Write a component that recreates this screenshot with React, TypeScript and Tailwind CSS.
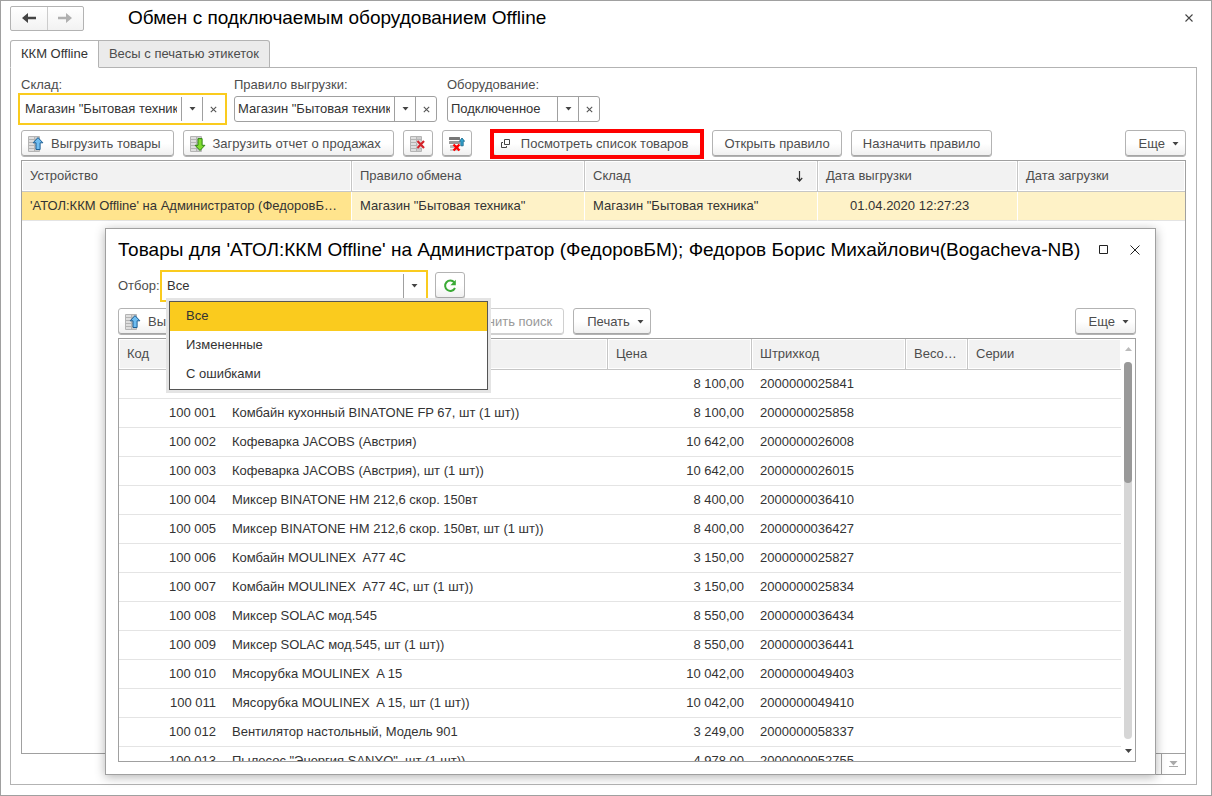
import { useState } from 'react';
import type { ReactNode } from 'react';

const devices = [
  {
    name: "'АТОЛ:ККМ Offline' на Администратор (ФедоровБМ); Федоров Борис Михайлович",
    rule: 'Магазин "Бытовая техника"',
    store: 'Магазин "Бытовая техника"',
    uploaded: '01.04.2020 12:27:23',
    downloaded: '',
  },
];

const goods = [
  ['', '', '8 100,00', '2000000025841'],
  ['100 001', 'Комбайн кухонный BINATONE FP 67, шт (1 шт))', '8 100,00', '2000000025858'],
  ['100 002', 'Кофеварка JACOBS (Австрия)', '10 642,00', '2000000026008'],
  ['100 003', 'Кофеварка JACOBS (Австрия), шт (1 шт))', '10 642,00', '2000000026015'],
  ['100 004', 'Миксер BINATONE HM 212,6 скор. 150вт', '8 400,00', '2000000036410'],
  ['100 005', 'Миксер BINATONE HM 212,6 скор. 150вт, шт (1 шт))', '8 400,00', '2000000036427'],
  ['100 006', 'Комбайн MOULINEX  A77 4C', '3 150,00', '2000000025827'],
  ['100 007', 'Комбайн MOULINEX  A77 4C, шт (1 шт))', '3 150,00', '2000000025834'],
  ['100 008', 'Миксер SOLAC мод.545', '8 550,00', '2000000036434'],
  ['100 009', 'Миксер SOLAC мод.545, шт (1 шт))', '8 550,00', '2000000036441'],
  ['100 010', 'Мясорубка MOULINEX  A 15', '10 042,00', '2000000049403'],
  ['100 011', 'Мясорубка MOULINEX  A 15, шт (1 шт))', '10 042,00', '2000000049410'],
  ['100 012', 'Вентилятор настольный, Модель 901', '3 249,00', '2000000058337'],
  ['100 013', 'Пылесос "Энергия SANYO", шт (1 шт))', '4 978,00', '2000000052755'],
];

const filters = ['Все', 'Измененные', 'С ошибками'];

function Caret() {
  return (
    <svg width="7" height="4" viewBox="0 0 7 4" className="shrink-0" aria-hidden="true">
      <path d="M0.5 0h6L3.5 3.6z" fill="#444" />
    </svg>
  );
}

function SmallCross() {
  return (
    <svg width="7" height="7" viewBox="0 0 7 7" aria-hidden="true">
      <path d="M0.8 0.8l5.4 5.4M6.2 0.8L0.8 6.2" stroke="#555" strokeWidth="1.1" />
    </svg>
  );
}

function Rack() {
  return (
    <g>
      <rect x="0" y="0" width="12" height="16" rx="1" fill="#b4b4b4" />
      {[1, 4, 7, 10, 13].map((y) => (
        <g key={y}>
          <rect x="1" y={y} width="5" height="2" fill="#dedede" />
          <rect x="7" y={y} width="4" height="2" fill="#cccccc" />
        </g>
      ))}
    </g>
  );
}

function UploadIcon() {
  return (
    <svg width="16" height="16" viewBox="0 0 16 16" className="shrink-0" aria-hidden="true">
      <Rack />
      <path d="M10 1.6l4.9 5.2h-2.8v6.7H8V6.8H5.100z" fill="#6fbdf0" stroke="#1d5f95" />
    </svg>
  );
}

function DownloadIcon() {
  return (
    <svg width="16" height="16" viewBox="0 0 16 16" className="shrink-0" aria-hidden="true">
      <Rack />
      <path d="M10 14.500L5.100 9.300H8V2.600h4.100v6.700h2.800z" fill="#7fdb2e" stroke="#2f8413" />
    </svg>
  );
}

function ClearIcon() {
  return (
    <svg width="16" height="16" viewBox="0 0 16 16" className="shrink-0" aria-hidden="true">
      <Rack />
      <path d="M7.500 5l6.500 7M14 5l-6.500 7" stroke="#fff" strokeWidth="3.600" opacity="0.6" />
      <path d="M7.500 5l6.500 7M14 5l-6.500 7" stroke="#d2232a" strokeWidth="2.200" />
    </svg>
  );
}

function ClearUploadIcon() {
  return (
    <svg width="16" height="16" viewBox="0 0 16 16" className="shrink-0" aria-hidden="true">
      <rect x="0" y="1" width="11" height="3" rx="0.5" fill="#777" />
      <rect x="0" y="5" width="11" height="3" rx="0.5" fill="#999" />
      <rect x="1" y="9" width="9" height="3" rx="0.5" fill="#bbb" />
      <rect x="1" y="13" width="9" height="2" rx="0.5" fill="#ccc" />
      <path d="M13 2l2.600 3.300h-1.400v4.500h-2.400v-4.500h-1.400z" fill="#35a4cf" stroke="#0f6288" strokeWidth="0.800" />
      <path d="M4.500 8.500l6 6M10.500 8.500l-6 6" stroke="#f00" strokeWidth="2.400" />
    </svg>
  );
}

function WindowsIcon() {
  return (
    <svg width="14" height="10" viewBox="0 0 14 10" className="shrink-0" aria-hidden="true">
      <path d="M4.500 0.500h5v5h-5zM3 3.500H1.500v5h5V7" fill="none" stroke="#444" />
    </svg>
  );
}

function RefreshIcon() {
  return (
    <svg width="14" height="14" viewBox="0 0 14 14" aria-hidden="true">
      <path d="M11.300 3.300A5.200 5.200 0 1 0 12 9" fill="none" stroke="#3aaa35" strokeWidth="2" />
      <path d="M12.800 0.800v5.400H7.400z" fill="#3aaa35" />
    </svg>
  );
}

function Arrow({ back, color }: { back?: boolean; color: string }) {
  return (
    <svg width="14" height="12" viewBox="0 0 14 12" aria-hidden="true">
      {back ? (
        <path d="M0 6l6-5v3.800h8v2.400H6V11z" fill={color} />
      ) : (
        <path d="M14 6L8 1v3.800H0v2.400h8V11z" fill={color} />
      )}
    </svg>
  );
}

const buttonBase =
  'flex h-[27px] shrink-0 items-center justify-center rounded-[3px] border border-[#b3b3b3] bg-linear-to-b from-white from-50% to-[#efefef] inset-shadow-[0_-1px_0_#a6a6a6] whitespace-nowrap text-[#4d4d4d]';

function Button({ icon, menu, children }: { icon?: ReactNode; menu?: boolean; children: ReactNode }) {
  const padding = icon ? 'pl-1.5 pr-3' : menu ? 'pl-[13px] pr-1.5' : 'px-[11px]';
  return (
    <button type="button" className={`${buttonBase} gap-[7px] ${padding}`}>
      {icon}
      {children}
      {menu && <Caret />}
    </button>
  );
}

function IconButton({ label, children }: { label: string; children: ReactNode }) {
  return (
    <button type="button" aria-label={label} className={`${buttonBase} w-[30px]`}>
      {children}
    </button>
  );
}

function Field({ id, label, value, width, active }: { id: string; label: string; value: string; width: string; active?: boolean }) {
  const frame = active
    ? 'border-transparent outline-2 outline-offset-1 outline-[#facb1e]'
    : 'rounded-[3px] border-[#a0a0a0]';
  return (
    <div className={width}>
      <label htmlFor={id} className="mb-0.5 block leading-[18px] text-[#4d4d4d]">
        {label}
      </label>
      <div className={`flex h-[26px] border bg-white ${frame}`}>
        <input id={id} defaultValue={value} className="mr-1 ml-[3px] min-w-0 flex-1 text-[#333] outline-none" />
        <button type="button" aria-label="Выбрать" className="flex w-[21px] items-center justify-center border-l border-[#a0a0a0]">
          <Caret />
        </button>
        <button type="button" aria-label="Очистить" className="flex w-[21px] items-center justify-center border-l border-[#a0a0a0]">
          <SmallCross />
        </button>
      </div>
    </div>
  );
}

function HeadCell({ children, last }: { children?: ReactNode; last?: boolean }) {
  return (
    <th
      className={`h-[31px] truncate border-b border-[#c6c6c6] bg-[#f2f2f2] px-2 text-left font-normal text-[#4d4d4d] inset-shadow-[0_0_0_1px_#fff] ${last ? '' : 'border-r'}`}
    >
      {children}
    </th>
  );
}

function GoodsWindow() {
  const [filter, setFilter] = useState('Все');
  const [open, setOpen] = useState(true);
  return (
    <section
      role="dialog"
      aria-labelledby="goods-title"
      className="absolute top-[227px] right-[55px] bottom-5 left-[104px] flex flex-col border border-[#a0a0a0] bg-white pr-[19px] pb-3 pl-3 shadow-[0_2px_10px_rgba(0,0,0,0.3)]"
    >
      <header className="flex h-[42px] shrink-0 items-center justify-between">
        <h2 id="goods-title" className="truncate text-[19px] leading-6 text-black">
          Товары для 'АТОЛ:ККМ Offline' на Администратор (ФедоровБМ); Федоров Борис Михайлович(Bogacheva-NB)
        </h2>
        <div className="-mr-3 flex shrink-0 items-center">
          <button type="button" aria-label="Развернуть" className="flex h-6 w-9 items-center justify-center">
            <svg width="10" height="10" viewBox="0 0 10 10" aria-hidden="true">
              <path d="M0.500 0.500h8v8h-8z" fill="none" stroke="#222" />
            </svg>
          </button>
          <button type="button" aria-label="Закрыть окно" className="flex h-6 w-[26px] items-center justify-center">
            <svg width="10" height="10" viewBox="0 0 10 10" aria-hidden="true">
              <path d="M0.500 0.500l9 9M9.500 0.500l-9 9" stroke="#222" />
            </svg>
          </button>
        </div>
      </header>

      <div className="mt-px flex items-center">
        <label htmlFor="goods-filter" className="w-[45px] shrink-0 text-[#4d4d4d]">
          Отбор:
        </label>
        <div className="relative w-[262px]">
          <div className="relative flex h-[26px] items-center outline-2 outline-offset-1 outline-[#facb1e]">
            <select
              id="goods-filter"
              value={filter}
              onChange={(event) => setFilter(event.target.value)}
              onMouseDown={(event) => {
                event.preventDefault();
                setOpen(!open);
              }}
              className="h-full w-full appearance-none pl-1 text-[#333] outline-none"
            >
              {filters.map((name) => (
                <option key={name}>{name}</option>
              ))}
            </select>
            <span className="pointer-events-none absolute inset-y-px right-0 flex w-[22px] items-center justify-center border-l border-[#a0a0a0]">
              <Caret />
            </span>
          </div>
          {open && (
            <ul className="absolute top-7 left-1.5 z-10 w-[319px] border border-[#555] bg-white ring-3 ring-[#e4e4e4]">
              {filters.map((name) => (
                <li key={name}>
                  <button
                    type="button"
                    onClick={() => {
                      setFilter(name);
                      setOpen(false);
                    }}
                    className={`block h-[29px] w-full px-4 text-left text-[#333] ${name === filter ? 'bg-[#facb1e]' : 'bg-white'}`}
                  >
                    {name}
                  </button>
                </li>
              ))}
            </ul>
          )}
        </div>
        <div className="ml-2.5">
          <IconButton label="Обновить">
            <RefreshIcon />
          </IconButton>
        </div>
      </div>

      <div className="mt-[9px] mb-[3px] flex gap-[9px]">
        <Button icon={<UploadIcon />}>Выгрузить товары</Button>
        <button type="button" className={`${buttonBase} w-[155px]`}>
          Найти...
        </button>
        <button
          type="button"
          disabled
          className="h-[27px] shrink-0 rounded-[3px] border border-[#d0d0d0] bg-white px-[11px] text-[#999] inset-shadow-[0_-1px_0_#d0d0d0]"
        >
          Отменить поиск
        </button>
        <Button menu>Печать</Button>
        <div className="ml-auto">
          <Button menu>Еще</Button>
        </div>
      </div>

      <div className="flex min-h-0 flex-1 border border-[#a0a0a0]">
        <div className="min-w-0 flex-1 overflow-hidden">
          <table className="w-full table-fixed border-separate border-spacing-0 text-[#333]">
            <colgroup>
              <col className="w-[105px]" />
              <col />
              <col className="w-36" />
              <col className="w-[154px]" />
              <col className="w-[62px]" />
              <col className="w-[153px]" />
            </colgroup>
            <thead>
              <tr>
                <HeadCell>Код</HeadCell>
                <HeadCell>Номенклатура</HeadCell>
                <HeadCell>Цена</HeadCell>
                <HeadCell>Штрихкод</HeadCell>
                <HeadCell>Весовой</HeadCell>
                <HeadCell last>Серии</HeadCell>
              </tr>
            </thead>
            <tbody>
              {goods.map(([code, name, price, barcode]) => (
                <tr key={barcode} className="h-[29px] *:border-b *:border-[#e4e4e4] *:px-2">
                  <td className="text-right">{code}</td>
                  <td className="truncate whitespace-pre">{name}</td>
                  <td className="text-right">{price}</td>
                  <td>{barcode}</td>
                  <td />
                  <td />
                </tr>
              ))}
            </tbody>
          </table>
        </div>
        <div className="flex w-3.5 shrink-0 flex-col items-center pt-2 pb-2" aria-hidden="true">
          <svg width="7" height="4" viewBox="0 0 7 4" className="mb-[11px]">
            <path d="M3.500 0L7 4H0z" fill="#bbb" />
          </svg>
          <div className="min-h-0 w-2 flex-1 rounded-full bg-[#d6d6d6]">
            <div className="h-[32%] rounded-full bg-[#999]" />
          </div>
          <svg width="7" height="4" viewBox="0 0 7 4" className="mt-2.5">
            <path d="M0 0h7L3.500 4z" fill="#444" />
          </svg>
        </div>
      </div>
    </section>
  );
}

export default function App() {
  return (
    <main className="relative flex h-screen flex-col border border-[#a0a0a0] bg-white pr-3.5 pb-2.5 pl-[9px] font-['Liberation_Sans',Arial,sans-serif] text-[13px] leading-[18px]">
      <header className="flex h-[34px] shrink-0 items-center">
        <div className="mr-11 flex h-[25px] w-[74px] rounded-[2px] border border-[#b3b3b3] bg-linear-to-b from-white to-[#f2f2f2]">
          <button type="button" aria-label="Назад" className="flex flex-1 items-center justify-center border-r border-[#ccc]">
            <Arrow back color="#444" />
          </button>
          <button type="button" aria-label="Вперед" className="flex flex-1 items-center justify-center">
            <Arrow color="#b0b0b0" />
          </button>
        </div>
        <h1 className="text-[19px] leading-6 text-black">Обмен с подключаемым оборудованием Offline</h1>
        <button type="button" aria-label="Закрыть" className="ml-auto flex size-4 items-center justify-center">
          <svg width="8" height="8" viewBox="0 0 8 8" aria-hidden="true">
            <path d="M0.500 0.500l7 7M7.500 0.500l-7 7" stroke="#444" strokeWidth="1.100" />
          </svg>
        </button>
      </header>

      <div role="tablist" className="relative mt-[5px] -mb-px flex h-7 shrink-0">
        <button
          type="button"
          role="tab"
          aria-selected="true"
          className="rounded-tl-[3px] border border-[#b3b3b3] border-b-white bg-white px-2.5 text-[#333]"
        >
          ККМ Offline
        </button>
        <button
          type="button"
          role="tab"
          aria-selected="false"
          className="rounded-tr-[3px] border border-l-0 border-[#b3b3b3] bg-[#ebebeb] px-2.5 text-[#4d4d4d]"
        >
          Весы с печатью этикеток
        </button>
      </div>

      <div role="tabpanel" className="flex min-h-0 flex-1 flex-col border border-[#b3b3b3] px-2.5 pt-2 pb-[9px]">
        <div className="flex gap-2.5">
          <Field id="store" label="Склад:" value={'Магазин "Бытовая техника"'} width="w-[203px]" active />
          <Field id="rule" label="Правило выгрузки:" value={'Магазин "Бытовая техника"'} width="w-[203px]" />
          <Field id="equipment" label="Оборудование:" value="Подключенное" width="w-[153px]" />
        </div>

        <div className="mt-2 mb-[3px] flex gap-[9px]">
          <Button icon={<UploadIcon />}>Выгрузить товары</Button>
          <Button icon={<DownloadIcon />}>Загрузить отчет о продажах</Button>
          <IconButton label="Очистить товары">
            <ClearIcon />
          </IconButton>
          <IconButton label="Очистить и выгрузить">
            <ClearUploadIcon />
          </IconButton>
          <div className="relative mr-0.5 ml-3">
            <Button icon={<WindowsIcon />}>Посмотреть список товаров</Button>
            <span className="pointer-events-none absolute -inset-x-[3px] -top-px -bottom-0.5 border-4 border-[#fe0000]" />
          </div>
          <Button>Открыть правило</Button>
          <Button>Назначить правило</Button>
          <div className="ml-auto">
            <Button menu>Еще</Button>
          </div>
        </div>

        <div className="min-h-0 flex-1 overflow-hidden border border-[#a0a0a0]">
          <table className="w-full table-fixed border-separate border-spacing-0 text-[#333]">
            <colgroup>
              <col className="w-[330px]" />
              <col className="w-[233px]" />
              <col className="w-[233px]" />
              <col className="w-[200px]" />
              <col />
            </colgroup>
            <thead>
              <tr>
                <HeadCell>Устройство</HeadCell>
                <HeadCell>Правило обмена</HeadCell>
                <HeadCell>
                  <span className="flex items-center justify-between pr-1.5">
                    Склад
                    <svg width="7" height="11" viewBox="0 0 7 11" aria-label="По возрастанию">
                      <path d="M3.500 0v10M0.800 7l2.700 3 2.700-3" fill="none" stroke="#333" strokeWidth="1.200" />
                    </svg>
                  </span>
                </HeadCell>
                <HeadCell>Дата выгрузки</HeadCell>
                <HeadCell last>Дата загрузки</HeadCell>
              </tr>
            </thead>
            <tbody>
              {devices.map((device) => (
                <tr
                  key={device.name}
                  className="h-[29px] *:border-r *:border-b *:border-r-white *:border-b-[#e4e4e4] *:bg-[#fef2c7] *:px-2 *:inset-shadow-[0_1px_0_#fff,inset_0_-1px_0_#fff] *:last:border-r-0"
                >
                  <td className="truncate bg-[#ffe48d]!">{device.name}</td>
                  <td className="truncate">{device.rule}</td>
                  <td className="truncate">{device.store}</td>
                  <td className="pl-8! whitespace-nowrap">{device.uploaded}</td>
                  <td>{device.downloaded}</td>
                </tr>
              ))}
            </tbody>
          </table>
        </div>
        <div className="flex h-[21px] shrink-0 justify-end">
          <button type="button" aria-label="В начало" className="w-[25px] border-b border-l border-[#a0a0a0]" />
          <button type="button" aria-label="В конец" className="flex w-[25px] items-center justify-center border-x border-b border-[#a0a0a0]">
            <svg width="9" height="6" viewBox="0 0 9 6" aria-hidden="true">
              <path d="M0.500 0h8l-4 4.500zM0 5h9v1H0z" fill="#aaa" />
            </svg>
          </button>
        </div>
      </div>

      <GoodsWindow />
    </main>
  );
}
